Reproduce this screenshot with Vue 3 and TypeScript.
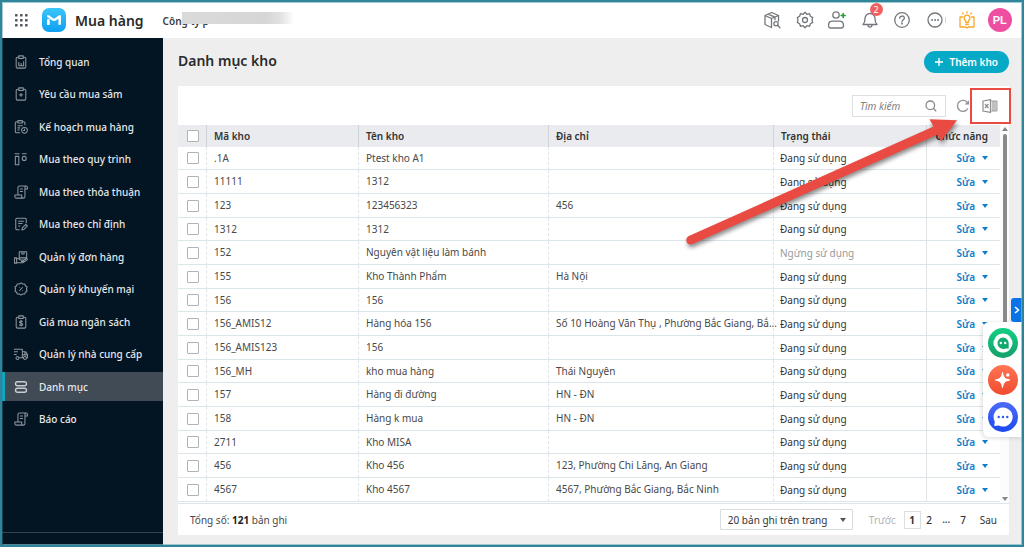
<script setup lang="ts">
import { ref } from 'vue'

interface MenuItem {
  label: string
  icon: string
}
interface Warehouse {
  code: string
  name: string
  address: string
  active: boolean
}

const clip = 'M5.5 2.5H4a1.5 1.5 0 0 0-1.5 1.5v9.5A1.5 1.5 0 0 0 4 15h8a1.5 1.5 0 0 0 1.5-1.5V4A1.5 1.5 0 0 0 12 2.5h-1.5M5.500 1h5v3h-5z'
const scroll = 'M4.500 11V3A1.800 1.800 0 0 1 6.300 1.200H14M14 1.200a1.300 1.300 0 0 1 1.300 1.300v2h-2.800M12.500 4.500V2.700A1.500 1.500 0 0 1 14 1.200M12.500 4.500v8.700A1.700 1.700 0 0 1 10.800 15H2.700A1.700 1.700 0 0 1 1 13.300V11.500h7.800v1.700a1.800 1.800 0 0 0 1.900 1.800M6.800 4.500h3.400M6.800 7.500h3.400'

const menu: MenuItem[] = [
  { label: 'Tổng quan', icon: clip + 'M5.500 8v4.300h5.500V7M8.200 9v3' },
  { label: 'Yêu cầu mua sắm', icon: clip + 'M8 7v4M6 9h4' },
  { label: 'Kế hoạch mua hàng', icon: 'M4.500 2H3a1.500 1.500 0 0 0-1.500 1.500v9.500A1.500 1.500 0 0 0 3 14.500h4M9.500 2H11a1.500 1.500 0 0 1 1.500 1.500V6M4.500 .700h5v2.800h-5zM4 6.500h6M4 9h3M4 11.500h2.500M12 8.500a3.300 3.300 0 1 0 0 6.600 3.300 3.300 0 0 0 0-6.600M12 10v2h-1.500' },
  { label: 'Mua theo quy trình', icon: 'M.800 2h5.400M9 2h5.400M1.500 5h4v9.500h-4zM11.700 5a2.300 2.300 0 1 0 0 4.600 2.300 2.300 0 0 0 0-4.600' },
  { label: 'Mua theo thỏa thuận', icon: scroll },
  { label: 'Mua theo chỉ định', icon: 'M6.500 14.500H3.500A1.500 1.500 0 0 1 2 13V3a1.500 1.500 0 0 1 1.500-1.500h9A1.500 1.500 0 0 1 14 3v4M4.800 4.800h6.400M4.800 7.500h5M4.800 10.200h2.500M9 14.800l.500-2.400 4-4 1.800 1.800-4 4z' },
  { label: 'Quản lý đơn hàng', icon: 'M.500 9h2.500v6H.500zM3 10h2.500l2 1.500h3c1 0 1 1.500 0 1.500H8M3 14.500h7l5-3.200c.8-.800-.200-1.700-1.200-1.200L11.500 11.500M6 2h8.500v7H6zM9 2v2.500h2.500V2' },
  { label: 'Quản lý khuyến mại', icon: 'M8 1l1.900 1.300 2.300-.100.800 2.100L14.900 5.700 14.300 8l.600 2.300-1.900 1.400-.800 2.100-2.300-.100L8 15l-1.900-1.300-2.300.100-.800-2.100-1.900-1.400L1.700 8l-.600-2.300L3 4.300l.800-2.100 2.300.100zM6 10l4-4M6 6l.500.500M9.500 9.500l.500.500' },
  { label: 'Giá mua ngân sách', icon: clip + 'M10 7.500C9.500 6.500 6.300 6.400 6.300 8S10 9 10 10.600 6.700 12.200 6 11M8.100 5.800v7' },
  { label: 'Quản lý nhà cung cấp', icon: 'M0 2.500h9.500v9.800H6M9.500 5.500h4l2 3.500v3.300h-1.200M10.800 12.300H9.500M9.500 9h6M12.500 5.500V9M0 5.500h4.500M0 8.500h3M4 10.800a1.700 1.700 0 1 0 0 3.400 1.700 1.700 0 0 0 0-3.400M12.500 10.800a1.700 1.700 0 1 0 0 3.400 1.700 1.700 0 0 0 0-3.400' },
  { label: 'Danh mục', icon: 'M4 2h8a1.700 1.700 0 0 1 0 4.500H4A1.700 1.700 0 0 1 4 2zM4 9.500h8a1.700 1.700 0 0 1 0 4.500H4a1.700 1.700 0 0 1 0-4.500z' },
  { label: 'Báo cáo', icon: scroll },
]
const current = ref('Danh mục')

const w = (code: string, name: string, address = '', active = true): Warehouse => ({ code, name, address, active })
const rows: Warehouse[] = [
  w('.1A', 'Ptest kho A1'),
  w('11111', '1312'),
  w('123', '123456323', '456'),
  w('1312', '1312'),
  w('152', 'Nguyên vật liệu làm bánh', '', false),
  w('155', 'Kho Thành Phẩm', 'Hà Nội'),
  w('156', '156'),
  w('156_AMIS12', 'Hàng hóa 156', 'Số 10 Hoàng Văn Thụ , Phường Bắc Giang, Bắ...'),
  w('156_AMIS123', '156'),
  w('156_MH', 'kho mua hàng', 'Thái Nguyên'),
  w('157', 'Hàng đi đường', 'HN - ĐN'),
  w('158', 'Hàng k mua', 'HN - ĐN'),
  w('2711', 'Kho MISA'),
  w('456', 'Kho 456', '123, Phường Chi Lăng, An Giang'),
  w('4567', 'Kho 4567', '4567, Phường Bắc Giang, Bắc Ninh'),
]
const selected = ref<string[]>([])
const search = ref('')
const page = ref(1)
</script>

<template>
  <div class="app">
    <header class="topbar">
      <button class="apps" aria-label="Ứng dụng">
        <svg viewBox="0 0 13 13" width="13" height="13" fill="#55585f">
          <template v-for="r in 3" :key="r">
            <rect v-for="c in 3" :key="c" :x="(c - 1) * 5" :y="(r - 1) * 5" width="2.600" height="2.600" rx=".6" />
          </template>
        </svg>
      </button>
      <svg class="logo" viewBox="0 0 24 24" width="24" height="24">
        <defs>
          <linearGradient id="logoFill" x1="0" y1="0" x2="0" y2="1">
            <stop offset="0" stop-color="#3cc5fb" />
            <stop offset="1" stop-color="#0d9ff0" />
          </linearGradient>
        </defs>
        <rect width="24" height="24" rx="7" fill="url(#logoFill)" />
        <path d="M6.300 16.700V13M5.300 8.300c3 0 4 3.500 6.700 3.500s3.700-3.500 6.700-3.500M17.700 8.300v8.400" fill="none" stroke="#fff" stroke-width="2.500" />
        <path d="M5 11.500l2.500-1v6.200H5z" fill="#fff" />
      </svg>
      <strong class="brand">Mua hàng</strong>
      <div class="company">Công ty p<span class="redact"></span></div>
      <div class="tools">
        <button aria-label="Tra cứu">
          <svg viewBox="0 0 18 18" width="18" height="18" class="line">
            <path d="M8.500 16.500 2 13.500V4.500L8.700 1.500 15.500 4.500v5.500M2 4.500l6.500 3 7-3M8.500 7.500v9M5 3.200l7 3v2.500" />
            <circle cx="13" cy="12.700" r="2.100" /><path d="m14.600 14.300 2.400 2.400" />
          </svg>
        </button>
        <button aria-label="Thiết lập">
          <svg viewBox="0 0 18 18" width="18" height="18" class="line">
            <path d="M9 1.300 10.900 3.300 13.500 2.700 14.400 5.200 16.700 6.600 16 9l.700 2.400-2.300 1.400-.9 2.500-2.600-.600L9 16.700l-1.900-2-2.600.600-.9-2.500-2.300-1.400L2 9l-.700-2.400 2.300-1.400.9-2.500 2.600.600z" />
            <circle cx="9" cy="9" r="2.500" />
          </svg>
        </button>
        <button aria-label="Thêm người dùng">
          <svg viewBox="0 0 18 18" width="18" height="18" class="line">
            <circle cx="8" cy="4" r="3.200" />
            <path d="M4.500 10.200h7c2.500 0 4 1.800 4 4.300 0 1.500-.700 2.500-2 2.500h-11c-1.300 0-2-1-2-2.500 0-2.500 1.500-4.300 4-4.300z" />
            <path d="M15.200 2.500v4M13.200 4.500h4" stroke="#22a02c" stroke-width="1.600" />
          </svg>
        </button>
        <button class="bell" aria-label="Thông báo">
          <svg viewBox="0 0 18 18" width="18" height="18" class="line">
            <path d="M2 13.500c1.500-1.300 2-2.700 2-6a5 5 0 0 1 10 0c0 3.300.5 4.700 2 6zM7 14c0 2.700 4 2.700 4 0" />
          </svg>
          <span class="badge">2</span>
        </button>
        <button aria-label="Trợ giúp">
          <svg viewBox="0 0 18 18" width="18" height="18" class="line">
            <circle cx="9" cy="9" r="7.300" />
            <path d="M6.700 7.300c0-3 4.700-3 4.700-.200C11.400 8.800 9 9 9 10.500" /><circle cx="9" cy="12.600" r=".4" />
          </svg>
        </button>
        <button class="more" aria-label="Thêm">
          <svg viewBox="0 0 18 18" width="18" height="18" class="line">
            <circle cx="9" cy="9" r="7" /><path d="M6 9h.100M9 9h.100M12 9h.100" stroke-width="1.800" />
          </svg>
        </button>
        <button aria-label="Hướng dẫn">
          <svg viewBox="0 0 18 18" width="18" height="18" class="line gold">
            <path d="M4.500 6H2v10h5.500L9 17l1.500-1H16V6h-2.500M7.700 11.500V10C5 8 5.800 4.200 9 4.200s4 3.800 1.300 5.800v1.500zM7.800 13.500h2.400M9 .700v1.200M4.500 2l.800.900M13.500 2l-.8.900" />
          </svg>
        </button>
        <button class="avatar-btn"><span class="avatar">PL</span></button>
      </div>
    </header>

    <div class="body">
      <aside class="sidebar">
        <nav>
          <a v-for="m in menu" :key="m.label" href="#" :class="{ on: m.label === current }" @click.prevent="current = m.label">
            <svg viewBox="0 0 16 16" width="14" height="14"><path :d="m.icon" /></svg>
            <span>{{ m.label }}</span>
          </a>
        </nav>
        <div class="collapse"></div>
      </aside>

      <main>
        <div class="heading">
          <h1>Danh mục kho</h1>
          <button class="add">
            <svg viewBox="0 0 10 10" width="10" height="10"><path d="M5 1v8M1 5h8" stroke="#fff" stroke-width="1.400" /></svg>
            Thêm kho
          </button>
        </div>

        <section class="panel">
          <div class="toolbar">
            <div class="search">
              <input v-model="search" type="text" placeholder="Tìm kiếm" aria-label="Tìm kiếm" />
              <svg viewBox="0 0 12 12" width="12" height="12"><circle cx="5.300" cy="5.300" r="4.300" /><path d="m8.500 8.500 2.700 2.700" /></svg>
            </div>
            <button class="tool" aria-label="Tải lại">
              <svg viewBox="0 0 14 14" width="14" height="14" fill="none" stroke="#949494" stroke-width="1.400">
                <path d="M11.800 9.500A5.500 5.500 0 1 1 11.500 3.700L12.500 5" /><path d="M13 1.200v4.300H8.700z" fill="#949494" stroke="none" />
              </svg>
            </button>
            <button class="tool excel" aria-label="Xuất Excel">
              <svg viewBox="0 0 16 14" width="16" height="14" fill="none" stroke="#8e8e8e">
                <path d="M1 2 8.500.600v12.800L1 12z" stroke-width="1.200" /><path d="m3 5 3.500 4M6.500 5 3 9" stroke-width="1.200" />
                <path d="M8.500 2H15v10H8.500M11 2v10M13 2v10" stroke-width=".900" /><path d="M9 4h6M9 6h6M9 8h6M9 10h6" stroke-width=".400" />
              </svg>
            </button>
          </div>

          <div class="grid">
            <table>
              <colgroup>
                <col class="c-check" /><col class="c-code" /><col class="c-name" /><col /><col class="c-status" /><col class="c-act" />
              </colgroup>
              <thead>
                <tr>
                  <th><input type="checkbox" aria-label="Chọn tất cả" /></th>
                  <th>Mã kho</th>
                  <th>Tên kho</th>
                  <th>Địa chỉ</th>
                  <th>Trạng thái</th>
                  <th>Chức năng</th>
                </tr>
              </thead>
              <tbody>
                <tr v-for="r in rows" :key="r.code">
                  <td><input v-model="selected" type="checkbox" :value="r.code" :aria-label="r.code" /></td>
                  <td>{{ r.code }}</td>
                  <td>{{ r.name }}</td>
                  <td class="address">{{ r.address }}</td>
                  <td class="status" :class="{ off: !r.active }">{{ r.active ? 'Đang sử dụng' : 'Ngừng sử dụng' }}</td>
                  <td>
                    <div class="actions">
                      <button>Sửa</button>
                      <button aria-label="Thao tác khác"><i class="caret"></i></button>
                    </div>
                  </td>
                </tr>
              </tbody>
            </table>
            <div class="scrollbar"><i class="up"></i><i class="thumb"></i><i class="down"></i></div>
          </div>

          <footer>
            <span class="total">Tổng số: <b>121</b> bản ghi</span>
            <div class="size">
              <select aria-label="Số bản ghi trên trang"><option>20 bản ghi trên trang</option></select>
              <i class="caret"></i>
            </div>
            <div class="pager">
              <button class="prev" disabled>Trước</button>
              <button class="num" :class="{ cur: page === 1 }" @click="page = 1">1</button>
              <button class="num" :class="{ cur: page === 2 }" @click="page = 2">2</button>
              <span class="num">...</span>
              <button class="num" :class="{ cur: page === 7 }" @click="page = 7">7</button>
              <button class="next">Sau</button>
            </div>
          </footer>

          <svg class="arrow" viewBox="0 0 280 140" width="280" height="140" aria-hidden="true">
            <path d="M3.900 120 248.500 10.500 244.500 3.300 272 4.300 256 25.300 252.300 18.800 7.600 128.100A4.400 4.400 0 0 1 3.900 120z" fill="#e94b43" />
          </svg>
        </section>
      </main>
    </div>

    <button class="tab" aria-label="Mở rộng"><svg viewBox="0 0 8 10" width="8" height="10"><path d="m2 2 3.500 3L2 8" /></svg></button>
    <div class="dock">
      <button aria-label="Hỗ trợ">
        <svg viewBox="0 0 30 30" width="30" height="30">
          <defs><linearGradient id="g1" x1="0" y1="0" x2="0" y2="1"><stop offset="0" stop-color="#12cf83" /><stop offset="1" stop-color="#14a06b" /></linearGradient></defs>
          <circle cx="15" cy="15" r="15" fill="url(#g1)" />
          <path d="M15 5.500c4.500 0 7.500 2.800 8.400 6 1.500.5 1.500 6.500 0 7-.9 3.300-3.900 6-8.400 6s-7.500-2.700-8.400-6c-1.500-.5-1.500-6.500 0-7 .9-3.200 3.900-6 8.400-6z" fill="#fff" />
          <path d="M15 9.500a5.700 5.700 0 1 0 2.500 10.900h3.200v-5A5.700 5.700 0 0 0 15 9.500z" fill="#12a970" />
          <circle cx="12.800" cy="15" r="1.200" fill="#fff" /><circle cx="17.200" cy="15" r="1.200" fill="#fff" />
        </svg>
      </button>
      <button aria-label="Trợ lý AI">
        <svg viewBox="0 0 30 30" width="30" height="30">
          <defs><linearGradient id="g2" x1="0" y1="0" x2="0" y2="1"><stop offset="0" stop-color="#ff7454" /><stop offset="1" stop-color="#f04b2f" /></linearGradient></defs>
          <circle cx="15" cy="15" r="15" fill="url(#g2)" />
          <path d="M14.500 7.500c.9 5 2.300 6.500 7.200 7.500-4.900 1-6.300 2.500-7.200 7.500-.9-5-2.300-6.500-7.200-7.500 4.900-1 6.300-2.500 7.200-7.500z" fill="#fff" stroke="#fff" stroke-linejoin="round" />
          <circle cx="19.800" cy="10" r="1.700" fill="#fff" />
        </svg>
      </button>
      <button aria-label="Trò chuyện">
        <svg viewBox="0 0 30 30" width="30" height="30">
          <defs><linearGradient id="g3" x1="0" y1="0" x2="0" y2="1"><stop offset="0" stop-color="#4d6cf7" /><stop offset="1" stop-color="#1d49f2" /></linearGradient></defs>
          <circle cx="15" cy="15" r="15" fill="url(#g3)" />
          <path d="M15 5.500a9.500 9.500 0 0 0-8.200 14.200L6.200 24l4.500-.600A9.500 9.500 0 1 0 15 5.500z" fill="#fff" />
          <circle cx="10.700" cy="15" r="1.200" fill="#2b55f3" /><circle cx="15" cy="15" r="1.200" fill="#2b55f3" /><circle cx="19.300" cy="15" r="1.200" fill="#2b55f3" />
        </svg>
      </button>
    </div>
  </div>
</template>

<style>
body {
  margin: 0;
}
</style>

<style scoped>
* {
  box-sizing: border-box;
}
button {
  font: inherit;
  color: inherit;
  background: none;
  border: 0;
  padding: 0;
}
svg {
  display: block;
  flex: none;
}
.app {
  position: relative;
  display: flex;
  flex-direction: column;
  height: 100vh;
  border: 2px solid #31859b;
  background: #eeeeee;
  font-family: 'Noto Sans', 'Open Sans', sans-serif;
  font-size: 10px;
  color: #484848;
}
.app::after {
  content: '';
  position: absolute;
  inset: 0;
  border: 1px solid rgba(120, 180, 195, 0.7);
  border-left-color: rgba(49, 133, 155, 0.4);
  pointer-events: none;
}
.topbar {
  display: flex;
  align-items: center;
  height: 36px;
  flex: none;
  background: #ffffff;
  padding: 0 6px 0 13px;
}
.logo {
  margin-left: 14px;
}
.brand {
  margin-left: 9px;
  font-size: 14px;
  font-weight: 600;
  color: #2a2a2a;
}
.company {
  position: relative;
  margin-left: 19px;
  padding-top: 2px;
  font-weight: 600;
  color: #3c3c3c;
}
.redact {
  position: absolute;
  left: 19px;
  top: 0;
  width: 112px;
  height: 12px;
  background: linear-gradient(90deg, #dadada, #d6d6d6 75%, #e2e2e2 88%, rgba(255, 255, 255, 0));
}
.tools {
  display: flex;
  width: 260px;
  margin-left: auto;
}
.tools button {
  flex: 1;
  display: flex;
  align-items: center;
  justify-content: center;
  position: relative;
}
.line {
  fill: none;
  stroke: #73777c;
  stroke-width: 1.3;
  stroke-linejoin: round;
  stroke-linecap: round;
}
.gold {
  stroke: #fba728;
}
.badge {
  position: absolute;
  left: 16px;
  top: -5px;
  width: 13px;
  height: 13px;
  border-radius: 7px;
  background: #f0605f;
  color: #ffffff;
  font-size: 9px;
  line-height: 13px;
}
.more::after {
  content: '';
  position: absolute;
  right: 5px;
  width: 1px;
  height: 6px;
  background: #d5d8da;
}
.avatar {
  width: 24px;
  height: 24px;
  border-radius: 50%;
  background: #ee4fa0;
  color: #ffffff;
  font-family: 'Liberation Sans', Arial, sans-serif;
  font-size: 11px;
  font-weight: 700;
  line-height: 24px;
}
.body {
  display: flex;
  flex: 1;
  min-height: 0;
}
.sidebar {
  display: flex;
  flex-direction: column;
  justify-content: space-between;
  width: 161px;
  flex: none;
  background: #031422;
}
nav {
  display: flex;
  flex-direction: column;
  justify-content: space-between;
  height: 396px;
  padding-top: 9px;
}
nav a {
  display: flex;
  align-items: center;
  gap: 11px;
  height: 29px;
  padding-left: 12px;
  color: #e6e8ea;
  font-weight: 500;
  text-decoration: none;
  white-space: nowrap;
}
nav svg {
  fill: none;
  stroke: #8d969e;
  stroke-width: 1.2;
  stroke-linejoin: round;
}
nav a.on {
  background: #414b56;
  box-shadow: inset 3px 0 #06a9c6;
}
nav a.on svg {
  stroke: #c9cdd1;
  stroke-width: 1.6;
}
.collapse {
  height: 13px;
  border-top: 1px solid #35434f;
}
main {
  display: flex;
  flex-direction: column;
  flex: 1;
  min-width: 0;
  padding: 0 13px 10px 15px;
}
.heading {
  display: flex;
  align-items: center;
  justify-content: space-between;
  height: 48px;
  flex: none;
}
h1 {
  margin: 0;
  padding-bottom: 3px;
  font-size: 14px;
  font-weight: 600;
  color: #2a2a2a;
}
.add {
  display: flex;
  align-items: center;
  gap: 5px;
  height: 22px;
  padding: 0 11px 0 10px;
  border-radius: 11px;
  background: #06a9c6;
  color: #ffffff;
  font-weight: 600;
}
.panel {
  position: relative;
  display: flex;
  flex-direction: column;
  flex: 1;
  min-height: 0;
  background: #ffffff;
}
.toolbar {
  display: flex;
  align-items: center;
  justify-content: flex-end;
  height: 39px;
  flex: none;
  padding-right: 11px;
}
.search {
  display: flex;
  align-items: center;
  width: 94px;
  height: 22px;
  padding: 0 8px 0 7px;
  border: 1px solid #dbe0e3;
}
.search input {
  flex: 1;
  min-width: 0;
  padding: 0;
  border: 0;
  outline: 0;
  font: italic 10px 'Noto Sans', sans-serif;
}
.search input::placeholder {
  color: #808080;
}
.search svg {
  fill: none;
  stroke: #8a8a8a;
  stroke-width: 1.3;
}
.tool {
  margin-left: 10px;
}
.excel {
  position: relative;
  margin-left: 12px;
}
.excel::after {
  content: '';
  position: absolute;
  inset: -11px -13px -11px -12px;
  border: 2px solid #e94b43;
}
.grid {
  display: flex;
  flex: 1;
  min-height: 0;
  overflow: hidden;
}
table {
  flex: 1;
  width: 100%;
  height: 0;
  border-collapse: separate;
  border-spacing: 0;
  table-layout: fixed;
}
.c-check {
  width: 29px;
}
.c-code {
  width: 152px;
}
.c-name {
  width: 190px;
}
.c-status {
  width: 153px;
}
.c-act {
  width: 73px;
}
th {
  height: 22px;
  padding: 0 7px;
  background: #e9ebef;
  border-right: 1px solid #d0d4d8;
  color: #333333;
  font-weight: 600;
  line-height: 14px;
  text-align: left;
}
td {
  height: 24px;
  padding: 0 6px 1px 7px;
  border-right: 1px dashed #dfe4e6;
  border-bottom: 1px solid #dce6ea;
  line-height: 14px;
  white-space: nowrap;
}
tr:nth-child(3n + 1) td {
  height: 23px;
}
th:first-child,
td:first-child {
  padding: 0 0 0 9px;
}
th:last-child,
td:last-child {
  padding: 0 12px 0 0;
  border-right: 0;
  text-align: right;
}
td.address {
  padding-right: 0;
}
td.status {
  padding: 0 6px;
  border-right-style: solid;
  color: #333333;
}
td.off {
  color: #999999;
}
input[type='checkbox'] {
  display: block;
  appearance: none;
  width: 12px;
  height: 12px;
  margin: 0;
  border: 1px solid #afb3b6;
  border-radius: 1px;
  background: #ffffff;
}
input[type='checkbox']:checked {
  background: #06a9c6;
}
.actions {
  display: flex;
  align-items: center;
  justify-content: flex-end;
  gap: 7px;
  color: #0f7dc7;
  font-weight: 600;
}
.caret {
  display: block;
  border: 3px solid transparent;
  border-top: 4px solid currentColor;
  border-bottom: 0;
}
.scrollbar {
  display: flex;
  flex-direction: column;
  align-items: center;
  width: 9px;
  flex: none;
  padding: 2px 0;
  background: #fcfcfc;
}
.thumb {
  width: 4px;
  height: 270px;
  margin: 3px 0 auto;
  border-radius: 2px;
  background: #8a8a8a;
}
.up,
.down {
  border: 3px solid transparent;
}
.up {
  border-top: 0;
  border-bottom: 4px solid #858585;
}
.down {
  border-bottom: 0;
  border-top: 4px solid #858585;
}
footer {
  display: flex;
  align-items: center;
  height: 32px;
  flex: none;
  padding: 0 12px;
  border-top: 1px solid #dce6ea;
}
footer b {
  font-weight: 700;
  color: #222222;
}
.size {
  position: relative;
  margin-left: auto;
}
.size select {
  display: block;
  appearance: none;
  width: 133px;
  height: 21px;
  padding: 0 7px;
  border: 1px solid #d5dde1;
  border-radius: 1px;
  background: #ffffff;
  color: #333333;
  font: 10px 'Noto Sans', sans-serif;
}
.size .caret {
  position: absolute;
  right: 7px;
  top: 9px;
  color: #555555;
  pointer-events: none;
}
.pager {
  display: flex;
  align-items: center;
  margin-left: 16px;
  color: #333333;
}
.prev {
  margin-right: 8px;
  color: #b0b4b8;
}
.num {
  width: 17px;
  height: 18px;
  line-height: 16px;
  text-align: center;
  font-weight: 500;
}
.cur {
  border: 1px solid #dcdfe1;
  font-weight: 700;
}
.next {
  margin-left: 8px;
}
.arrow {
  position: absolute;
  right: 44px;
  top: 30px;
  filter: drop-shadow(1px 3px 2px rgba(0, 0, 0, 0.45));
  pointer-events: none;
}
.dock {
  position: absolute;
  right: 0;
  top: 320px;
  display: flex;
  flex-direction: column;
  gap: 7px;
  padding: 6px 4px 5px 5px;
  border-radius: 6px 0 0 6px;
  background: #ffffff;
  box-shadow: -1px 1px 4px rgba(0, 0, 0, 0.15);
}
.tab {
  position: absolute;
  right: 0;
  top: 296px;
  display: flex;
  align-items: center;
  justify-content: center;
  width: 11px;
  height: 24px;
  border-radius: 3px 0 0 3px;
  background: #0a74e6;
}
.tab path {
  fill: none;
  stroke: #ffffff;
  stroke-width: 1.5;
}
</style>
